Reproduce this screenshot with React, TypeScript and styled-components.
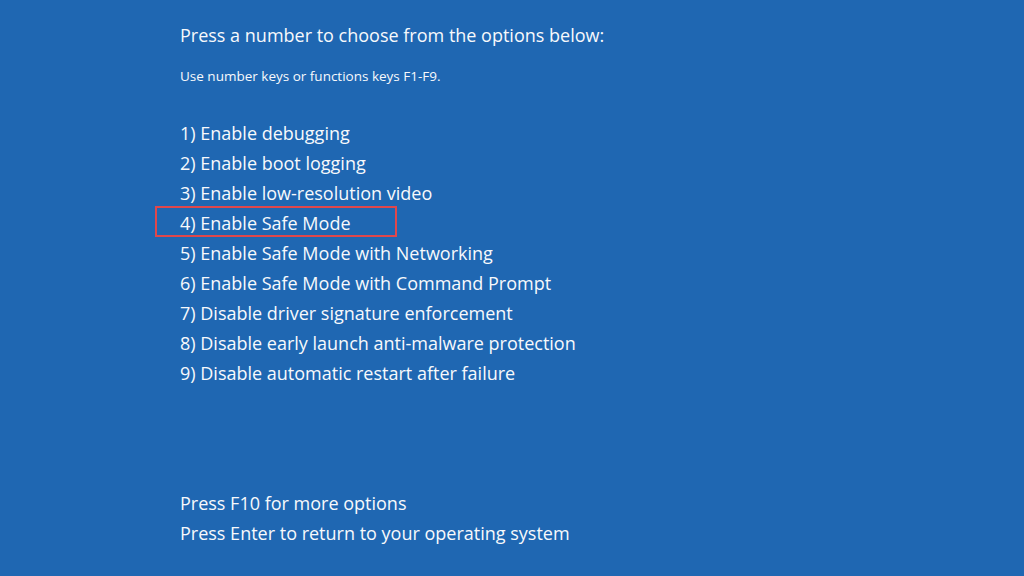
import React from "react";
import styled, { createGlobalStyle } from "styled-components";

const GlobalStyle = createGlobalStyle`
  html, body {
    margin: 0;
    padding: 0;
    background: #1f67b2;
  }
`;

const Screen = styled.div`
  width: 1024px;
  height: 576px;
  box-sizing: border-box;
  background: #1f67b2;
  color: #f7f9fc;
  font-family: "Open Sans", "Noto Sans", sans-serif;
  display: flex;
  flex-direction: column;
  padding: 20px 0 28px 180px;
`;

const Title = styled.div`
  font-size: 18px;
  line-height: 30px;
`;

const Hint = styled.div`
  font-size: 13.5px;
  line-height: 20px;
  margin-top: 16px;
`;

const OptionList = styled.div`
  display: flex;
  flex-direction: column;
  margin-top: 32px;
`;

const Option = styled.div<{ $selected?: boolean }>`
  font-size: 18px;
  line-height: 30px;
  position: relative;

  &::after {
    content: "";
    display: ${(props) => (props.$selected ? "block" : "none")};
    position: absolute;
    left: -25px;
    top: -2px;
    width: 242px;
    height: 31px;
    box-sizing: border-box;
    border: 2px solid #e0474c;
  }
`;

const Footer = styled.div`
  margin-top: auto;
  display: flex;
  flex-direction: column;
`;

const FooterLine = styled.div`
  font-size: 18px;
  line-height: 30px;
`;

const options = [
  "1) Enable debugging",
  "2) Enable boot logging",
  "3) Enable low-resolution video",
  "4) Enable Safe Mode",
  "5) Enable Safe Mode with Networking",
  "6) Enable Safe Mode with Command Prompt",
  "7) Disable driver signature enforcement",
  "8) Disable early launch anti-malware protection",
  "9) Disable automatic restart after failure",
];

const App = () => {
  return (
    <>
      <GlobalStyle />
      <Screen>
        <Title>Press a number to choose from the options below:</Title>
        <Hint>Use number keys or functions keys F1-F9.</Hint>
        <OptionList>
          {options.map((text, i) => (
            <Option key={text} $selected={i === 3}>
              {text}
            </Option>
          ))}
        </OptionList>
        <Footer>
          <FooterLine>Press F10 for more options</FooterLine>
          <FooterLine>Press Enter to return to your operating system</FooterLine>
        </Footer>
      </Screen>
    </>
  );
};

export default App;
